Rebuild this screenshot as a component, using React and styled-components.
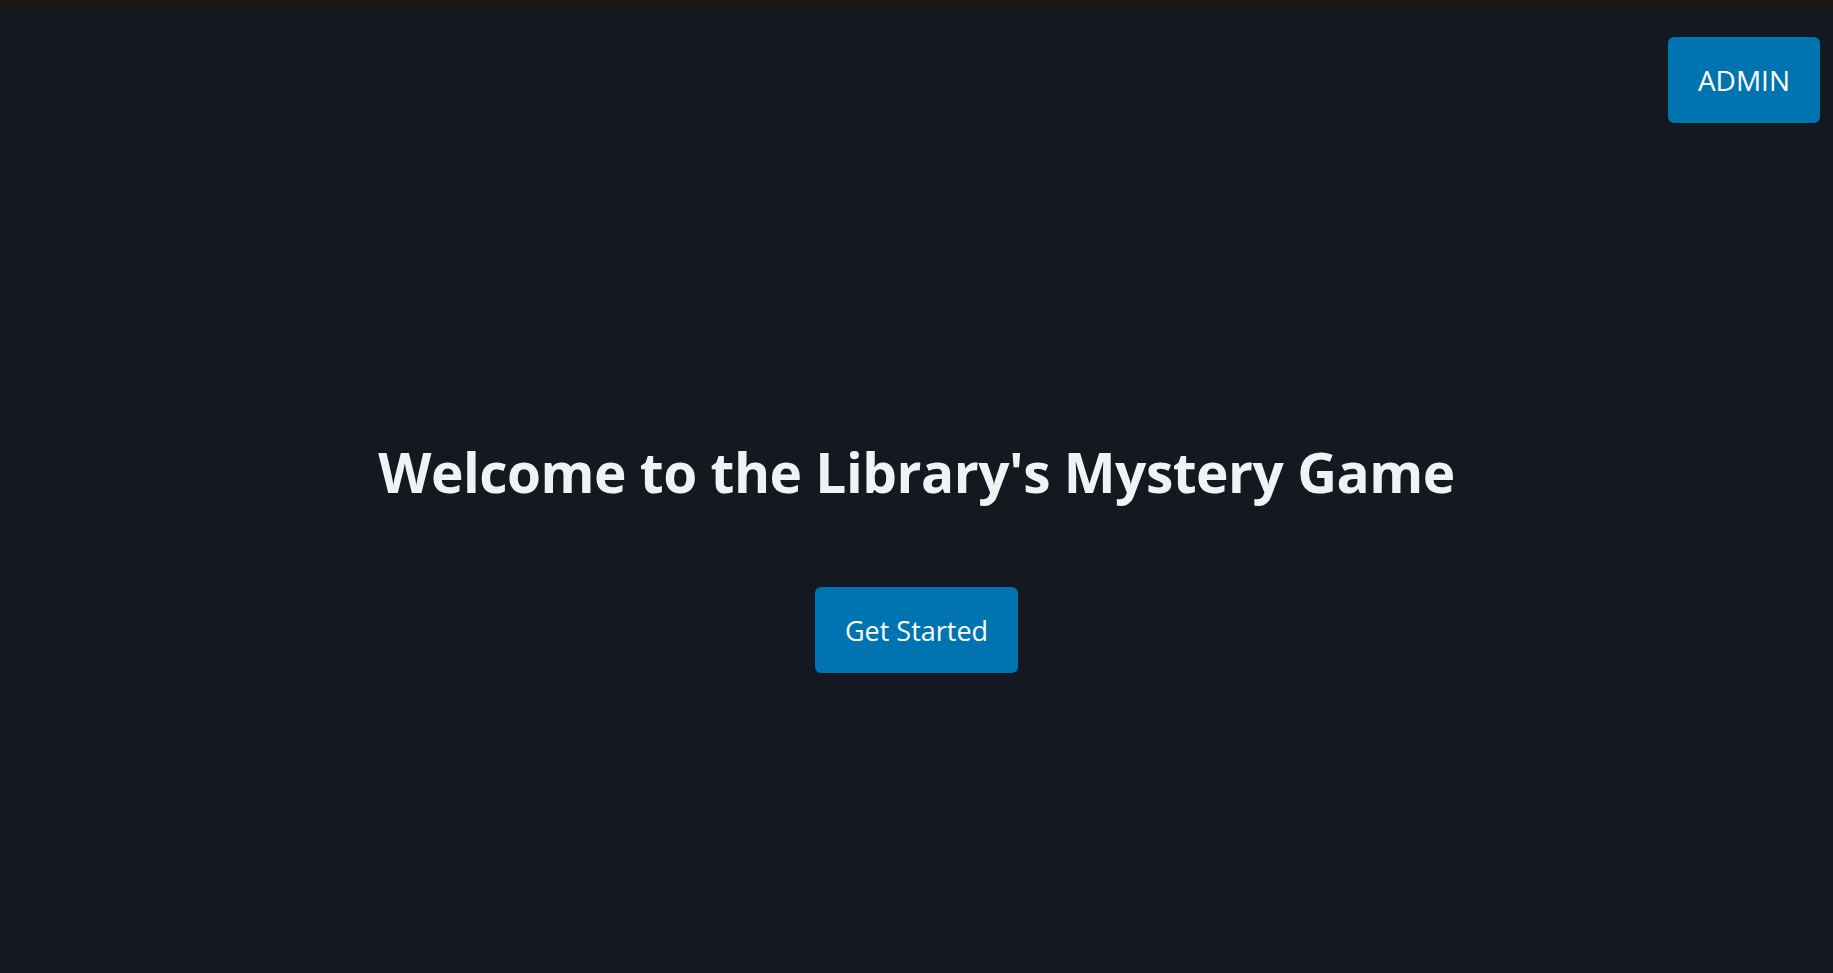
import React from 'react'
import styled, { createGlobalStyle } from 'styled-components'

const GlobalStyle = createGlobalStyle`
  html, body {
    margin: 0;
    padding: 0;
    background: #131821;
  }
  body {
    font-family: 'Open Sans', 'Noto Sans', sans-serif;
  }
`

const Page = styled.div`
  min-height: 100vh;
  box-sizing: border-box;
  display: flex;
  flex-direction: column;
  background: #131821;
  border-top: 8px solid #1b1712;
`

const Header = styled.header`
  display: flex;
  justify-content: flex-end;
  padding: 29px 13px 0 0;
`

const Button = styled.button`
  border: none;
  border-radius: 6px;
  background: #0074b0;
  color: #ffffff;
  font-family: 'Open Sans', 'Noto Sans', sans-serif;
  font-size: ${props => props.size || 26}px;
  height: 86px;
  padding: 0 ${props => props.pad || 25}px;
  cursor: pointer;
`

const Main = styled.main`
  display: flex;
  flex-direction: column;
  align-items: center;
  padding-top: 316px;
`

const Title = styled.h1`
  margin: 0 0 82px;
  font-family: 'Open Sans', 'Noto Sans', sans-serif;
  font-weight: 700;
  font-size: 55px;
  line-height: 1.2;
  color: #f1f2f4;
  letter-spacing: -0.5px;
`

export default function App() {
  return (
    <>
      <GlobalStyle />
      <Page>
        <Header>
          <Button size={28} pad={30}>ADMIN</Button>
        </Header>
        <Main>
          <Title>Welcome to the Library's Mystery Game</Title>
          <Button size={27} pad={30}>Get Started</Button>
        </Main>
      </Page>
    </>
  )
}
